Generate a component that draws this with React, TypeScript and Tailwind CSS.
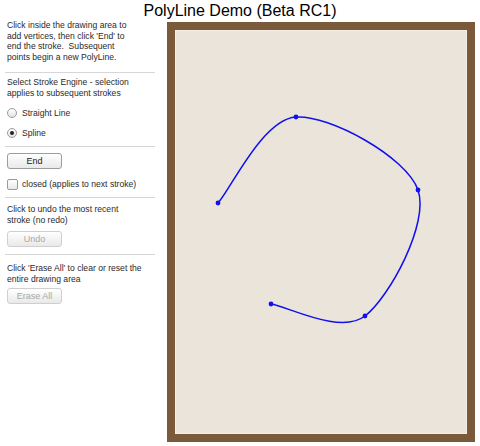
import React, { useState } from 'react';

type Pt = [number, number];

// vertices of the current stroke, in page pixels
const vertices: Pt[] = [
  [218, 203],
  [296, 117],
  [418, 190],
  [365, 316],
  [271, 304],
];

// Catmull-Rom through the vertices, written as cubic beziers
function splinePath(pts: Pt[]) {
  let d = `M ${pts[0][0]} ${pts[0][1]}`;
  for (let i = 0; i < pts.length - 1; i++) {
    const p0 = pts[Math.max(i - 1, 0)];
    const p1 = pts[i];
    const p2 = pts[i + 1];
    const p3 = pts[Math.min(i + 2, pts.length - 1)];
    const c1x = p1[0] + (p2[0] - p0[0]) / 6;
    const c1y = p1[1] + (p2[1] - p0[1]) / 6;
    const c2x = p2[0] - (p3[0] - p1[0]) / 6;
    const c2y = p2[1] - (p3[1] - p1[1]) / 6;
    d += ` C ${c1x} ${c1y} ${c2x} ${c2y} ${p2[0]} ${p2[1]}`;
  }
  return d;
}

function Divider({ className = '' }: { className?: string }) {
  return <div className={`h-px bg-[#d6d6d6] ml-[5px] w-[150px] ${className}`} />;
}

function PanelButton({ label, disabled, className = '' }: { label: string; disabled?: boolean; className?: string }) {
  return (
    <button
      className={`block w-[55px] h-[16px] ml-[7px] rounded-[3px] border text-[9px] leading-none bg-gradient-to-b from-white to-[#e9e9e9] ${
        disabled ? 'border-[#cfcfcf] text-[#a8a8a8]' : 'border-[#9c9c9c] text-[#222]'
      } ${className}`}
    >
      {label}
    </button>
  );
}

function Radio({ checked, label, className = '' }: { checked?: boolean; label: string; className?: string }) {
  return (
    <div className={`flex items-center h-[14px] pl-[7px] gap-[5px] ${className}`}>
      <span className="w-[10px] h-[10px] rounded-full border border-[#9a9a9a] bg-gradient-to-b from-white to-[#e4e4e4] flex items-center justify-center">
        {checked && <span className="w-[4px] h-[4px] rounded-full bg-[#222]" />}
      </span>
      <span>{label}</span>
    </div>
  );
}

export default function App() {
  const [closed, setClosed] = useState(false);

  return (
    <div className="w-[480px] h-[446px] bg-white text-black overflow-hidden" style={{ fontFamily: '"Liberation Sans", Arial, sans-serif' }}>
      <h1 className="h-[22px] text-center text-[16px] leading-[22px] font-normal">PolyLine Demo (Beta RC1)</h1>

      <div className="flex">
        <aside className="w-[160px] shrink-0 text-[8.6px] leading-[10.7px] text-[#2a2a2a]">
          <p className="-mt-[2px] pl-[7px]">
            Click inside the drawing area to
            <br />
            add vertices, then click 'End' to
            <br />
            end the stroke.&nbsp; Subsequent
            <br />
            points begin a new PolyLine.
          </p>

          <Divider className="mt-[9.6px]" />

          <p className="mt-[4px] pl-[7px] leading-[10.5px]">
            Select Stroke Engine - selection
            <br />
            applies to subsequent strokes
          </p>

          <Radio label="Straight Line" className="mt-[7.5px]" />
          <Radio label="Spline" checked className="mt-[6px]" />

          <Divider className="mt-[6.5px]" />

          <PanelButton label="End" className="mt-[6px]" />

          <label className="flex items-center h-[12px] mt-[9px] pl-[7px] gap-[4px]" onClick={() => setClosed(!closed)}>
            <span className="w-[11px] h-[11px] rounded-[2px] border border-[#9a9a9a] bg-gradient-to-b from-white to-[#e8e8e8]" />
            <span>closed (applies to next stroke)</span>
          </label>

          <Divider className="mt-[7px]" />

          <p className="mt-[6px] pl-[7px]">
            Click to undo the most recent
            <br />
            stroke (no redo)
          </p>

          <PanelButton label="Undo" disabled className="mt-[5.5px]" />

          <Divider className="mt-[7px]" />

          <p className="mt-[7.6px] pl-[7px]">
            Click 'Erase All' to clear or reset the
            <br />
            entire drawing area
          </p>

          <PanelButton label="Erase All" disabled className="mt-[4px]" />
        </aside>

        {/* drawing surface with its wooden frame */}
        <div className="ml-[7px] w-[308px] h-[420px] border-[8px] border-[#7b5a3b] shadow-[inset_0_0_0_1px_#f4eee4] bg-[#ebe4da]">
          <svg width="292" height="404" viewBox="175 30 292 404" className="block">
            <path d={splinePath(vertices)} fill="none" stroke="#1010f0" strokeWidth="1.5" />
            {vertices.map(([x, y]) => (
              <circle key={`${x}-${y}`} cx={x} cy={y} r="2.4" fill="#1010f0" />
            ))}
          </svg>
        </div>
      </div>
    </div>
  );
}
